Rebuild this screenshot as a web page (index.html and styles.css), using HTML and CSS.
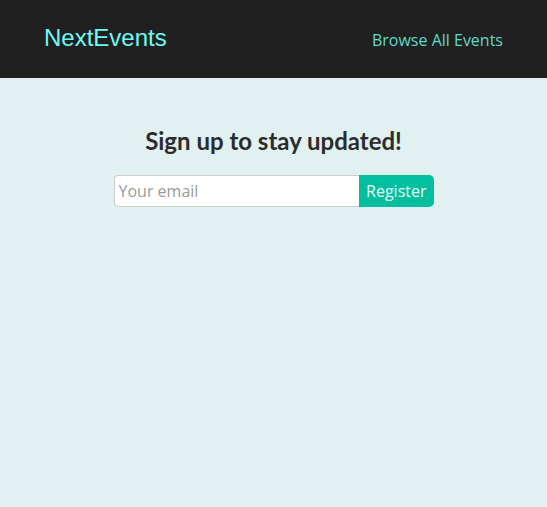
FILE: index.html
```html
<!DOCTYPE html>
<html>
<head>
<meta charset="utf-8">
<link rel="stylesheet" href="styles.css">
</head>
<body>
<header class="header">
  <div class="logo">NextEvents</div>
  <nav class="nav"><a href="#">Browse All Events</a></nav>
</header>
<main>
  <section class="newsletter">
    <h2>Sign up to stay updated!</h2>
    <form class="control">
      <input type="email" placeholder="Your email">
      <button type="button">Register</button>
    </form>
  </section>
</main>
</body>
</html>
```
FILE: styles.css
```css
* { box-sizing: border-box; }
html, body { margin: 0; padding: 0; }
body {
  background: #e1f1f1;
  font-family: "Open Sans", sans-serif;
  min-height: 507px;
}
.header {
  height: 78px;
  background: #202020;
  display: flex;
  justify-content: space-between;
  align-items: center;
  padding: 0 44px;
}
.logo {
  font-family: "Liberation Sans", Arial, sans-serif;
  font-size: 24px;
  color: #6ffaf5;
  margin-top: -2px;
}
.nav a {
  color: #5fd9ca;
  text-decoration: none;
  font-size: 16px;
}
.nav { margin-top: 2px; }
.newsletter {
  width: 320px;
  margin: 0 auto;
  padding-top: 48px;
}
.newsletter h2 {
  font-family: Lato, sans-serif;
  font-weight: 700;
  font-size: 24px;
  color: #2c2c2c;
  text-align: center;
  margin: 0 0 20px;
}
.control {
  display: flex;
}
.control input {
  flex: 1;
  font: inherit;
  font-size: 16px;
  height: 32px;
  padding: 0 4px;
  border: 1px solid #ccc;
  border-right: none;
  border-radius: 4px 0 0 4px;
  background: #fff;
}
.control input::placeholder { color: #9a9a9a; }
.control button {
  font: inherit;
  font-size: 16px;
  height: 32px;
  padding: 0 7px;
  border: none;
  background: #03be9f;
  color: #e6fff9;
  border-radius: 0 5px 5px 0;
}
```
